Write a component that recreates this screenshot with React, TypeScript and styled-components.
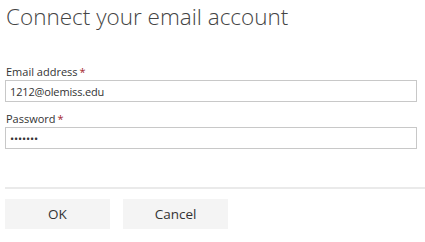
import styled, { createGlobalStyle } from "styled-components"

const GlobalStyle = createGlobalStyle`
    html, body {
        margin: 0;
        padding: 0;
        background: #ffffff;
    }
    body {
        font-family: "Open Sans", "Liberation Sans", sans-serif;
        color: #333333;
    }
`

export default function App() {
    return (
        <>
            <GlobalStyle />
            <Dialog>
                <Title>Connect your email account</Title>
                <Form>
                    <Field>
                        <Label>Email address<Required>*</Required></Label>
                        <Input type="text" defaultValue="1212@olemiss.edu" />
                    </Field>
                    <Field>
                        <Label>Password<Required>*</Required></Label>
                        <Input type="password" defaultValue="1234567" />
                    </Field>
                </Form>
                <Divider />
                <Actions>
                    <Button>OK</Button>
                    <Button>Cancel</Button>
                </Actions>
            </Dialog>
        </>
    )
}

const Dialog = styled.div`
    width: 425px;
    height: 242px;
    box-sizing: border-box;
    padding: 2px 0 0 5px;
    display: flex;
    flex-direction: column;
`
const Title = styled.h1`
    margin: 0 0 0 1px;
    font-size: 22.5px;
    font-weight: 300;
    line-height: 30px;
    color: #444444;
`
const Form = styled.div`
    margin-top: 32px;
    width: 412px;
    display: flex;
    flex-direction: column;
    gap: 9px;
`
const Field = styled.div`
    display: flex;
    flex-direction: column;
`
const Label = styled.label`
    font-size: 11px;
    line-height: 16px;
    margin-left: 1px;
    color: #333333;
`
const Required = styled.span`
    color: #a4262c;
    margin-left: 2px;
`
const Input = styled.input`
    box-sizing: border-box;
    height: 22px;
    width: 100%;
    margin: 0;
    padding: 0 4px;
    border: 1px solid #c8c8c8;
    font-family: "Open Sans", "Liberation Sans", sans-serif;
    font-size: 11px;
    letter-spacing: -0.15px;
    color: #333333;
    outline: none;
`
const Divider = styled.div`
    margin-top: 38px;
    height: 2px;
    background: #eaeaea;
    width: 420px;
`
const Actions = styled.div`
    margin-top: 10px;
    display: flex;
    gap: 13px;
`
const Button = styled.button`
    width: 105px;
    height: 30px;
    border: none;
    background: #f4f4f4;
    font-family: "Open Sans", "Liberation Sans", sans-serif;
    font-size: 13.5px;
    color: #333333;
    padding: 0;
`
